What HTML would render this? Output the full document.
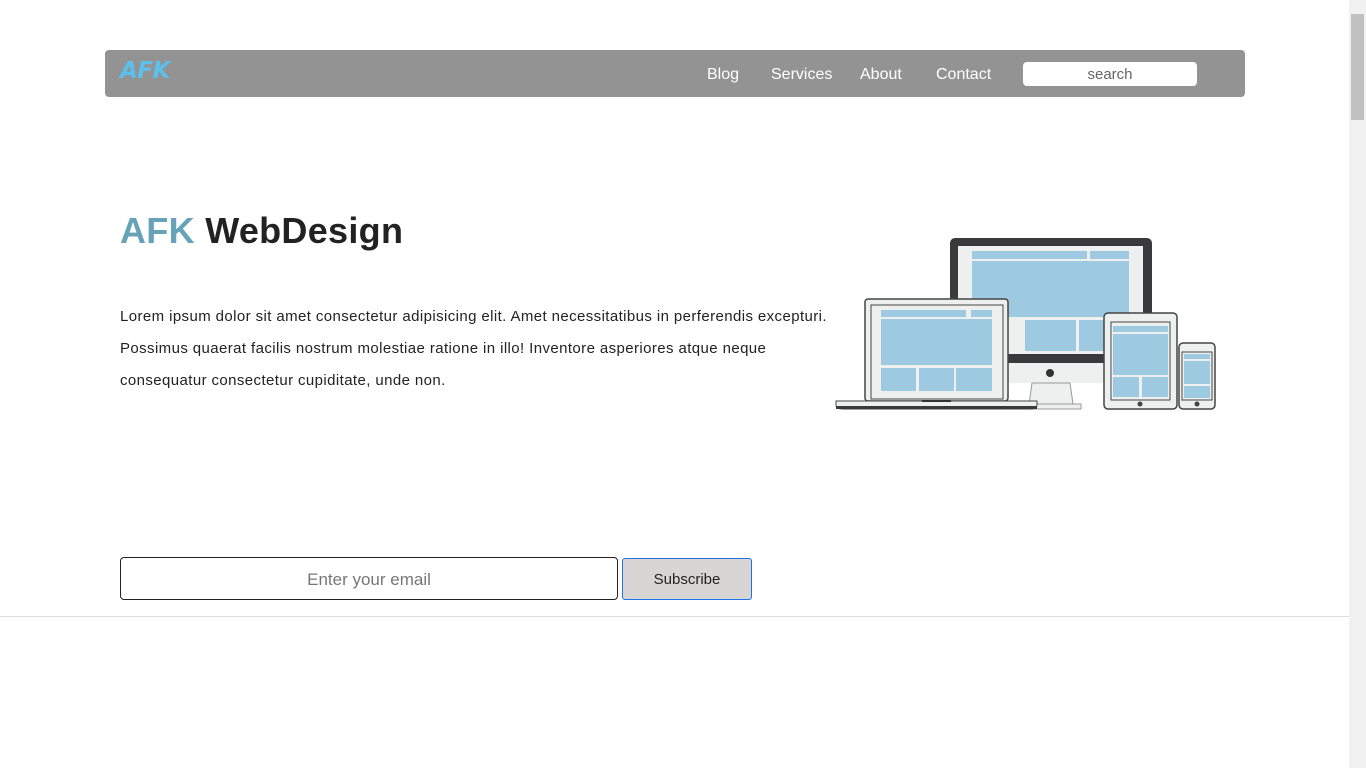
<!DOCTYPE html>
<html><head><style>
body{margin:0;width:1366px;height:768px;overflow:hidden;background:#fff;font-family:"Liberation Sans",sans-serif;position:relative}
.nav{position:absolute;left:105px;top:50px;width:1140px;height:47px;background:#939393;border-radius:4px}
.logo{position:absolute;left:15px;top:8px;font:bold italic 23px "DejaVu Sans",sans-serif;color:#5bc0eb;letter-spacing:-0.5px}
.nav a{position:absolute;top:16px;color:#fff;font-size:16px;text-decoration:none}
.search{position:absolute;left:918px;top:12px;width:174px;height:24px;background:#fff;border-radius:4px;text-align:center;line-height:25px;color:#666;font-size:15px}
h1{position:absolute;left:120px;top:210px;margin:0;font-size:36px;font-weight:bold;color:#222;letter-spacing:.3px}
h1 span{color:#66a3b8}
p{position:absolute;left:120px;top:301px;margin:0;width:715px;font-size:15px;line-height:32px;color:#222;letter-spacing:.4px}
.email{position:absolute;left:120px;top:557px;width:496px;height:41px;border:1px solid #222;border-radius:4px;text-align:center;line-height:43px;color:#777;font-size:17px}
.btn{position:absolute;left:622px;top:558px;width:128px;height:40px;border:1px solid #1a73e8;border-radius:3px;background:#d9d5d5;text-align:center;line-height:42px;font-size:15px;color:#222}
.hr{position:absolute;left:0;top:616px;width:1349px;height:1px;background:#ddd}
.sb{position:absolute;right:0;top:0;width:17px;height:768px;background:#f1f1f1}
.th{position:absolute;right:2px;top:14px;width:13px;height:106px;background:#c1c1c1}
</style></head><body>
<div class="nav"><div class="logo">AFK</div>
<a style="left:602px">Blog</a><a style="left:666px">Services</a><a style="left:755px">About</a><a style="left:831px">Contact</a>
<div class="search">search</div></div>
<h1><span>AFK</span> WebDesign</h1>
<p>Lorem ipsum dolor sit amet consectetur adipisicing elit. Amet necessitatibus in perferendis excepturi. Possimus quaerat facilis nostrum molestiae ratione in illo! Inventore asperiores atque neque consequatur consectetur cupiditate, unde non.</p>
<svg style="position:absolute;left:0;top:0" width="1366" height="768">
<g fill="#9ecae1">
<rect x="950" y="238" width="202" height="125" rx="5" fill="#3a3a3c"/>
<rect x="958" y="246" width="185" height="108" fill="#eef0f0"/>
<rect x="972" y="251" width="115" height="8"/><rect x="1090" y="251" width="39" height="8"/>
<rect x="972" y="261" width="157" height="56"/>
<rect x="1025" y="320" width="51" height="31"/><rect x="1079" y="320" width="50" height="31"/>
<rect x="950" y="360" width="202" height="3" fill="#3a3a3c"/>
<rect x="950" y="363" width="202" height="20" fill="#eef0f0"/>
<circle cx="1050" cy="373" r="4" fill="#333"/>
<path d="M1032 383H1070L1073 404H1029Z" fill="#eef0f0" stroke="#999"/>
<rect x="1028" y="404" width="53" height="5" fill="#eef0f0" stroke="#999"/>
<rect x="865" y="299" width="143" height="102" rx="3" fill="#eef0f0" stroke="#444" stroke-width="1.5"/>
<rect x="871" y="305" width="132" height="94" fill="#eef0f0" stroke="#444"/>
<rect x="881" y="310" width="85" height="7"/><rect x="971" y="310" width="21" height="7"/>
<rect x="881" y="319" width="111" height="46"/>
<rect x="881" y="368" width="35" height="23"/><rect x="919" y="368" width="35" height="23"/><rect x="956" y="368" width="36" height="23"/>
<path d="M836 401H1037V405Q1037 409 1030 409H843Q836 409 836 405Z" fill="#eef0f0" stroke="#444"/>
<rect x="836" y="406" width="201" height="3" fill="#3a3a3c"/>
<rect x="922" y="400" width="29" height="2" fill="#333"/>
<rect x="1104" y="313" width="73" height="96" rx="4" fill="#eef0f0" stroke="#444" stroke-width="1.5"/>
<rect x="1111" y="322" width="59" height="78" fill="#eef0f0" stroke="#444"/>
<rect x="1113" y="326" width="55" height="6"/><rect x="1113" y="334" width="55" height="41"/>
<rect x="1113" y="377" width="26" height="20"/><rect x="1142" y="377" width="26" height="20"/>
<circle cx="1140" cy="404" r="2.5" fill="#444"/>
<rect x="1179" y="343" width="36" height="66" rx="4" fill="#eef0f0" stroke="#444" stroke-width="1.5"/>
<rect x="1182" y="352" width="30" height="48" fill="#eef0f0" stroke="#444"/>
<rect x="1184" y="354" width="26" height="5"/><rect x="1184" y="361" width="26" height="23"/><rect x="1184" y="386" width="26" height="12"/>
<circle cx="1197" cy="404" r="2.5" fill="#444"/>
</g></svg>
<div class="email">Enter your email</div>
<div class="btn">Subscribe</div>
<div class="hr"></div>
<div class="sb"><div class="th"></div></div>
</body></html>
